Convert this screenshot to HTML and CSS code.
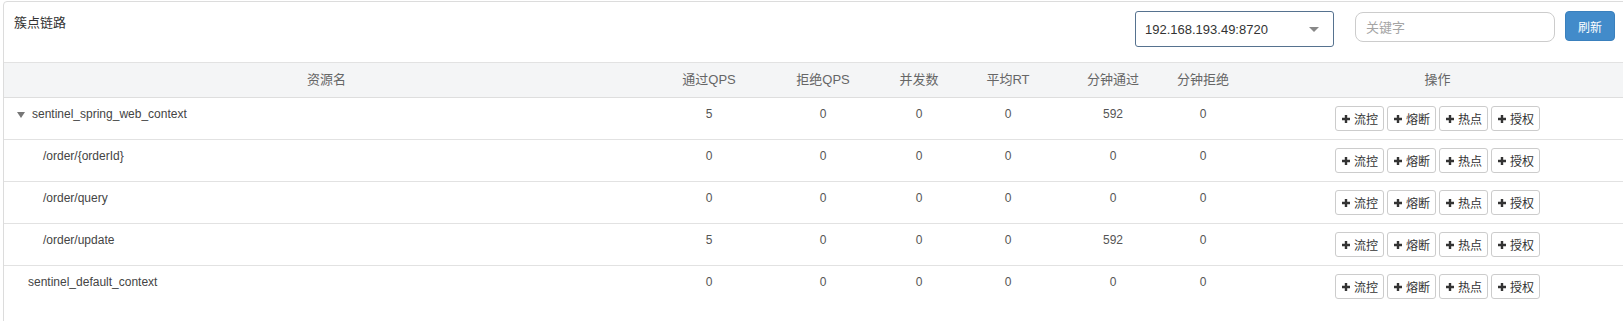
FILE: index.html
```html
<!DOCTYPE html>
<html lang="zh-CN">
<head>
    <meta charset="UTF-8">
    <meta name="viewport" content="width=device-width, initial-scale=1.0">
    <title>簇点链路</title>
    <link rel="stylesheet" href="styles.css">
</head>
<body>
    <div class="page">
        <div class="panel">
            <div class="panel-heading">
                <span class="panel-title">簇点链路</span>
                <div class="toolbar">
                    <div class="machine-select">
                        <span>192.168.193.49:8720</span>
                        <span class="caret"></span>
                    </div>
                    <input type="text" class="search-input" placeholder="关键字">
                    <button class="btn-refresh">刷新</button>
                </div>
            </div>

            <table class="resource-table">
                <colgroup>
                    <col class="col-name">
                    <col class="col-pass">
                    <col class="col-block">
                    <col class="col-thread">
                    <col class="col-rt">
                    <col class="col-min-pass">
                    <col class="col-min-block">
                    <col class="col-ops">
                </colgroup>
                <thead>
                    <tr>
                        <th>资源名</th>
                        <th>通过QPS</th>
                        <th>拒绝QPS</th>
                        <th>并发数</th>
                        <th>平均RT</th>
                        <th>分钟通过</th>
                        <th>分钟拒绝</th>
                        <th>操作</th>
                    </tr>
                </thead>
                <tbody>
                    <tr>
                        <td class="name"><span class="toggle"></span>sentinel_spring_web_context</td>
                        <td>5</td><td>0</td><td>0</td><td>0</td><td>592</td><td>0</td>
                        <td class="ops-cell">
                            <div class="ops">
                                <button class="btn-op"><svg viewBox="0 0 8 8"><path d="M4 0v8M0 4h8"/></svg>流控</button>
                                <button class="btn-op"><svg viewBox="0 0 8 8"><path d="M4 0v8M0 4h8"/></svg>熔断</button>
                                <button class="btn-op"><svg viewBox="0 0 8 8"><path d="M4 0v8M0 4h8"/></svg>热点</button>
                                <button class="btn-op"><svg viewBox="0 0 8 8"><path d="M4 0v8M0 4h8"/></svg>授权</button>
                            </div>
                        </td>
                    </tr>
                    <tr>
                        <td class="name child">/order/{orderId}</td>
                        <td>0</td><td>0</td><td>0</td><td>0</td><td>0</td><td>0</td>
                        <td class="ops-cell">
                            <div class="ops">
                                <button class="btn-op"><svg viewBox="0 0 8 8"><path d="M4 0v8M0 4h8"/></svg>流控</button>
                                <button class="btn-op"><svg viewBox="0 0 8 8"><path d="M4 0v8M0 4h8"/></svg>熔断</button>
                                <button class="btn-op"><svg viewBox="0 0 8 8"><path d="M4 0v8M0 4h8"/></svg>热点</button>
                                <button class="btn-op"><svg viewBox="0 0 8 8"><path d="M4 0v8M0 4h8"/></svg>授权</button>
                            </div>
                        </td>
                    </tr>
                    <tr>
                        <td class="name child">/order/query</td>
                        <td>0</td><td>0</td><td>0</td><td>0</td><td>0</td><td>0</td>
                        <td class="ops-cell">
                            <div class="ops">
                                <button class="btn-op"><svg viewBox="0 0 8 8"><path d="M4 0v8M0 4h8"/></svg>流控</button>
                                <button class="btn-op"><svg viewBox="0 0 8 8"><path d="M4 0v8M0 4h8"/></svg>熔断</button>
                                <button class="btn-op"><svg viewBox="0 0 8 8"><path d="M4 0v8M0 4h8"/></svg>热点</button>
                                <button class="btn-op"><svg viewBox="0 0 8 8"><path d="M4 0v8M0 4h8"/></svg>授权</button>
                            </div>
                        </td>
                    </tr>
                    <tr>
                        <td class="name child">/order/update</td>
                        <td>5</td><td>0</td><td>0</td><td>0</td><td>592</td><td>0</td>
                        <td class="ops-cell">
                            <div class="ops">
                                <button class="btn-op"><svg viewBox="0 0 8 8"><path d="M4 0v8M0 4h8"/></svg>流控</button>
                                <button class="btn-op"><svg viewBox="0 0 8 8"><path d="M4 0v8M0 4h8"/></svg>熔断</button>
                                <button class="btn-op"><svg viewBox="0 0 8 8"><path d="M4 0v8M0 4h8"/></svg>热点</button>
                                <button class="btn-op"><svg viewBox="0 0 8 8"><path d="M4 0v8M0 4h8"/></svg>授权</button>
                            </div>
                        </td>
                    </tr>
                    <tr>
                        <td class="name leaf">sentinel_default_context</td>
                        <td>0</td><td>0</td><td>0</td><td>0</td><td>0</td><td>0</td>
                        <td class="ops-cell">
                            <div class="ops">
                                <button class="btn-op"><svg viewBox="0 0 8 8"><path d="M4 0v8M0 4h8"/></svg>流控</button>
                                <button class="btn-op"><svg viewBox="0 0 8 8"><path d="M4 0v8M0 4h8"/></svg>熔断</button>
                                <button class="btn-op"><svg viewBox="0 0 8 8"><path d="M4 0v8M0 4h8"/></svg>热点</button>
                                <button class="btn-op"><svg viewBox="0 0 8 8"><path d="M4 0v8M0 4h8"/></svg>授权</button>
                            </div>
                        </td>
                    </tr>
                </tbody>
            </table>
        </div>
    </div>
</body>
</html>
```

FILE: styles.css
```css
/* Reset */
* {
    margin: 0;
    padding: 0;
    box-sizing: border-box;
}

body {
    font-family: "Liberation Sans", "Noto Sans CJK SC", sans-serif;
    font-size: 12px;
    color: #444;
    background: #fff;
    overflow: hidden;
}

.page {
    padding: 1px 0 0 3px;
}

/* Panel */
.panel {
    width: 1638px;
    border: 1px solid #dcdcdc;
    border-radius: 4px 0 0 0;
    padding-bottom: 40px;
}

.panel-heading {
    display: flex;
    align-items: flex-start;
    height: 61px;
    padding: 0 25px 0 10px;
    border-bottom: 1px solid #e2e2e2;
}

.panel-title {
    padding-top: 12px;
    font-size: 13px;
    line-height: 18px;
    color: #333;
}

.toolbar {
    margin-left: auto;
    display: flex;
    align-items: flex-start;
}

.machine-select {
    margin-top: 9px;
    width: 199px;
    height: 36px;
    display: flex;
    align-items: center;
    justify-content: space-between;
    padding: 0 14px 0 9px;
    border: 1px solid #56728f;
    border-radius: 3px;
    font-size: 13px;
    color: #333;
}

.machine-select .caret {
    width: 0;
    height: 0;
    border-left: 5px solid transparent;
    border-right: 5px solid transparent;
    border-top: 5px solid #888;
}

.search-input {
    margin: 10px 0 0 21px;
    width: 200px;
    height: 30px;
    padding: 0 10px;
    border: 1px solid #ccc;
    border-radius: 8px;
    font-family: inherit;
    font-size: 13px;
    color: #333;
    outline: none;
}

.search-input::placeholder {
    color: #a5a5a5;
}

.btn-refresh {
    margin: 9px 0 0 10px;
    width: 50px;
    height: 30px;
    background: #428bca;
    border: 1px solid #3a80bd;
    border-radius: 4px;
    color: #fff;
    font-family: inherit;
    font-size: 12px;
}

/* Table */
.resource-table {
    width: 100%;
    table-layout: fixed;
    border-collapse: separate;
    border-spacing: 0;
}

.col-name { width: 645px; }
.col-pass { width: 120px; }
.col-block { width: 108px; }
.col-thread { width: 84px; }
.col-rt { width: 94px; }
.col-min-pass { width: 116px; }
.col-min-block { width: 64px; }
.col-ops { width: 405px; }

.resource-table th {
    height: 34px;
    padding: 8px 0;
    line-height: 18px;
    font-size: 13px;
    font-weight: normal;
    color: #666;
    background: #f4f5f6;
    border-bottom: 1px solid #dedede;
    text-align: center;
}

.resource-table td {
    padding: 8px 0;
    line-height: 17px;
    color: #555;
    text-align: center;
    vertical-align: top;
    border-bottom: 1px solid #e2e2e2;
}

.resource-table tbody tr:last-child td {
    border-bottom: none;
}

.resource-table td.name {
    text-align: left;
    padding-left: 13px;
    color: #444;
}

.resource-table td.child {
    padding-left: 39px;
}

.resource-table td.leaf {
    padding-left: 24px;
}

.toggle {
    display: inline-block;
    width: 15px;
    height: 17px;
    vertical-align: top;
    position: relative;
}

.toggle::before {
    content: "";
    position: absolute;
    left: 0;
    top: 6px;
    border-left: 4px solid transparent;
    border-right: 4px solid transparent;
    border-top: 6px solid #777;
}

/* Operation buttons */
.ops {
    display: flex;
    justify-content: center;
    gap: 3px;
}

.btn-op {
    display: inline-flex;
    align-items: center;
    gap: 4px;
    width: 49px;
    height: 25px;
    padding: 0 0 0 6px;
    background: #fff;
    border: 1px solid #ccc;
    border-radius: 3px;
    font-family: inherit;
    font-size: 12px;
    color: #333;
}

.btn-op svg {
    width: 8px;
    height: 8px;
    flex: none;
}

.btn-op svg path {
    stroke: #333;
    stroke-width: 2.4;
}
```
